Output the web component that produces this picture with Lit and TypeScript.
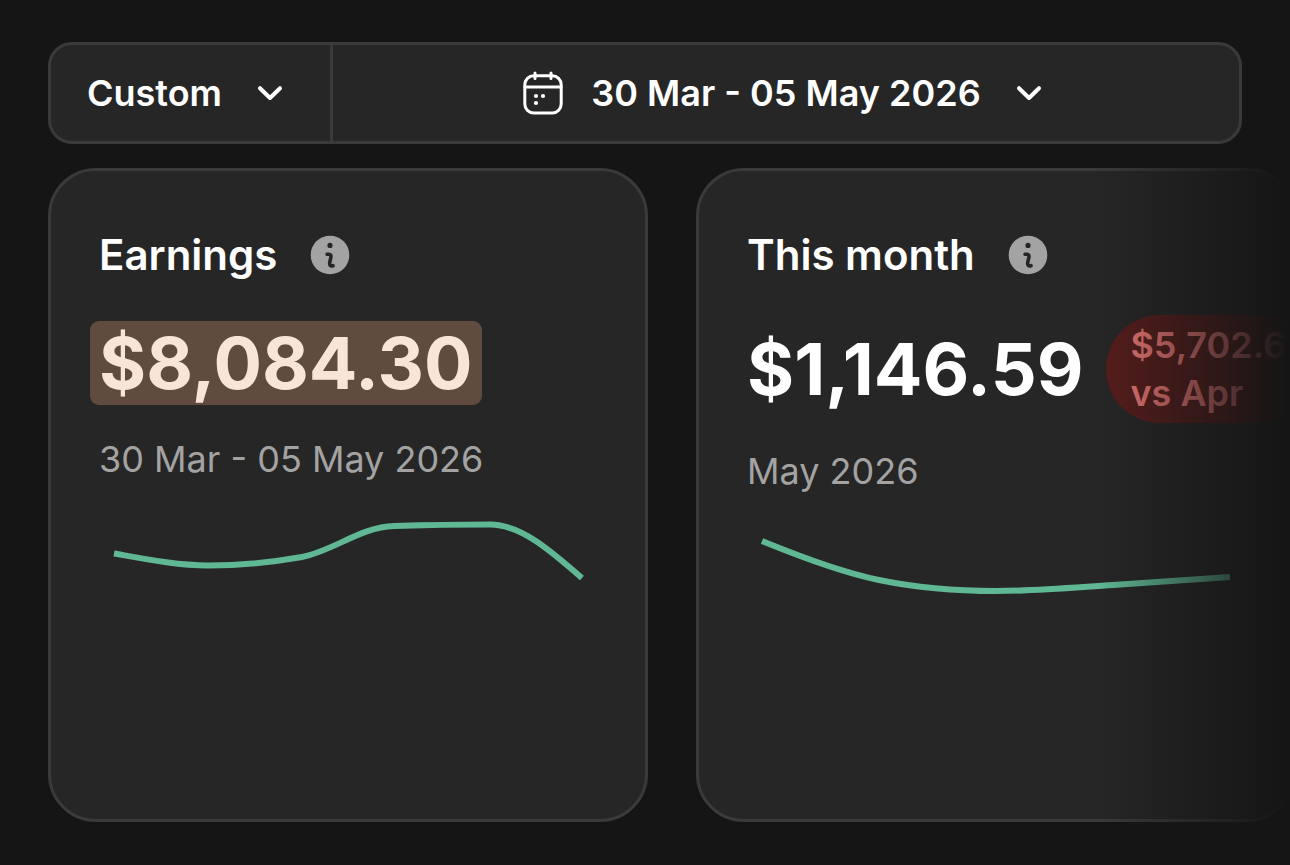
import { LitElement, html, css, svg, nothing } from "lit";
import { customElement, property } from "lit/decorators.js";

const chevronIcon = html`
  <svg class="icon" viewBox="0 0 48 48" aria-hidden="true">
    ${svg`<path d="M14 19.2 L24 29 L34 19.2" fill="none" stroke="#fff" stroke-width="4" stroke-linecap="round" stroke-linejoin="round" />`}
  </svg>
`;

const calendarIcon = html`
  <svg class="icon" viewBox="0 0 48 48" aria-hidden="true">
    ${svg`
      <g fill="none" stroke="#fff" stroke-width="3" stroke-linecap="round">
        <rect x="5.8" y="6.7" width="36.4" height="37.3" rx="9" />
        <path d="M6 18H42" />
        <path d="M16 4V9.5M32 4V9.5" />
      </g>
      <g fill="#fff">
        <circle cx="17" cy="27" r="2.1" />
        <circle cx="24" cy="27" r="2.1" />
        <circle cx="17" cy="34" r="2.1" />
      </g>
    `}
  </svg>
`;

const infoIcon = html`
  <svg class="icon" viewBox="0 0 48 48" aria-hidden="true">
    ${svg`
      <circle cx="24" cy="24" r="19.3" fill="#a3a3a3" />
      <circle cx="24" cy="14.4" r="2.6" fill="#262626" />
      <path d="M21.1 23.3 C24.2 22.8 25.5 24 24.8 26.8 L23.8 31 C23.2 34 24.4 35.4 27 34.7" fill="none" stroke="#262626" stroke-width="3.6" stroke-linecap="round" stroke-linejoin="round" />
    `}
  </svg>
`;

const iconStyles = css`
  .icon {
    display: block;
    flex: none;
    width: 48px;
    height: 48px;
  }
  button {
    font: inherit;
    color: inherit;
    background: none;
    border: 0;
    margin: 0;
    padding: 0;
    cursor: pointer;
  }
`;

@customElement("date-toolbar")
export class DateToolbar extends LitElement {
  static styles = [
    iconStyles,
    css`
      :host {
        display: flex;
        box-sizing: border-box;
        border: 3px solid #3a3a3a;
        border-radius: 24px;
        background: #262626;
        color: #fff;
        font-size: 36px;
        font-weight: 600;
        line-height: 48px;
      }
      .segment {
        display: flex;
        align-items: center;
        justify-content: center;
        gap: 24px;
        padding: 24px 36px;
        white-space: nowrap;
      }
      .range {
        flex: 1;
        border-left: 3px solid #3a3a3a;
      }
    `,
  ];

  render() {
    return html`
      <button class="segment" type="button">Custom ${chevronIcon}</button>
      <button class="segment range" type="button">
        ${calendarIcon} 30 Mar - 05 May 2026 ${chevronIcon}
      </button>
    `;
  }
}

@customElement("stat-card")
export class StatCard extends LitElement {
  @property() heading = "";
  @property() amount = "";
  @property() period = "";
  @property() line = "";
  @property({ type: Boolean }) marked = false;
  @property({ attribute: false }) change: string[] = [];

  static styles = [
    iconStyles,
    css`
      :host {
        display: flex;
        flex-direction: column;
        gap: 24px;
        box-sizing: border-box;
        padding: 48px;
        border: 3px solid #3a3a3a;
        border-radius: 48px;
        background: #262626;
        color: #fff;
      }
      .head {
        display: flex;
        align-items: center;
        gap: 29px;
      }
      .title {
        margin: 0;
        font-size: 42px;
        font-weight: 600;
        line-height: 72px;
        white-space: nowrap;
      }
      .figures {
        display: flex;
        align-items: center;
        gap: 23px;
      }
      .amount {
        font-size: 72px;
        font-weight: 700;
        line-height: 96px;
      }
      .mark {
        margin: 6px -9px;
        padding: 0 9px;
        border-radius: 9px;
        background: #5f4c3e;
        color: #f8e5d8;
        line-height: 84px;
      }
      .change {
        flex: none;
        padding: 6px 24px;
        border-radius: 54px;
        background: #561d1b;
        color: #ee7876;
        font-size: 36px;
        font-weight: 600;
        line-height: 48px;
      }
      .change-line {
        display: block;
        white-space: nowrap;
      }
      .period {
        margin: 0;
        color: #a3a3a3;
        font-size: 36px;
        line-height: 48px;
      }
      .chart {
        display: block;
        width: 100%;
      }
    `,
  ];

  render() {
    return html`
      <div class="head">
        <h2 class="title">${this.heading}</h2>
        <button type="button" aria-label="About this figure">${infoIcon}</button>
      </div>
      <div class="figures">
        <div class="amount">
          ${this.marked ? html`<div class="mark">${this.amount}</div>` : this.amount}
        </div>
        ${this.change.length
          ? html`<div class="change">
              ${this.change.map((text) => html`<span class="change-line">${text}</span>`)}
            </div>`
          : nothing}
      </div>
      <p class="period">${this.period}</p>
      <svg class="chart" viewBox="0 0 498 90" aria-hidden="true">
        ${svg`<path d=${this.line} fill="none" stroke="#5fb794" stroke-width="6" />`}
      </svg>
    `;
  }
}

@customElement("app-root")
export class AppRoot extends LitElement {
  static styles = css`
    :host {
      display: flex;
      flex-direction: column;
      gap: 24px;
      box-sizing: border-box;
      min-height: 100vh;
      padding: 42px 48px 43px;
      overflow: hidden;
      background: #151515;
      font-family: Inter, sans-serif;
    }
    .carousel {
      position: relative;
      display: flex;
      flex: 1;
      gap: 48px;
      margin-right: -48px;
      overflow: hidden;
    }
    .card {
      flex: none;
      width: calc((100% - 42px) / 2);
    }
    .fade {
      position: absolute;
      inset: 0 0 0 auto;
      width: 192px;
      background: linear-gradient(to right, rgba(21, 21, 21, 0), #151515);
      pointer-events: none;
    }
  `;

  render() {
    return html`
      <date-toolbar></date-toolbar>
      <div class="carousel">
        <stat-card
          class="card"
          heading="Earnings"
          amount="$8,084.30"
          period="30 Mar - 05 May 2026"
          line="M15 46.5 C46 52 78 58.5 109 58.5 C140 58.5 172 55.5 203 50 C234 44 262 20 295 19 C328 18 359 17.5 391 17.5 C422 17.5 452 44 483 71"
          marked
        ></stat-card>
        <stat-card
          class="card"
          heading="This month"
          amount="$1,146.59"
          period="May 2026"
          line="M15 22 C54 38 93 53 132 61 C171 69 210 72 249 72 C288 72 327 68.5 366 66 C405 63.5 444 60.7 483 58"
          .change=${["$5,702.6", "vs Apr"]}
        ></stat-card>
        <div class="fade"></div>
      </div>
    `;
  }
}
